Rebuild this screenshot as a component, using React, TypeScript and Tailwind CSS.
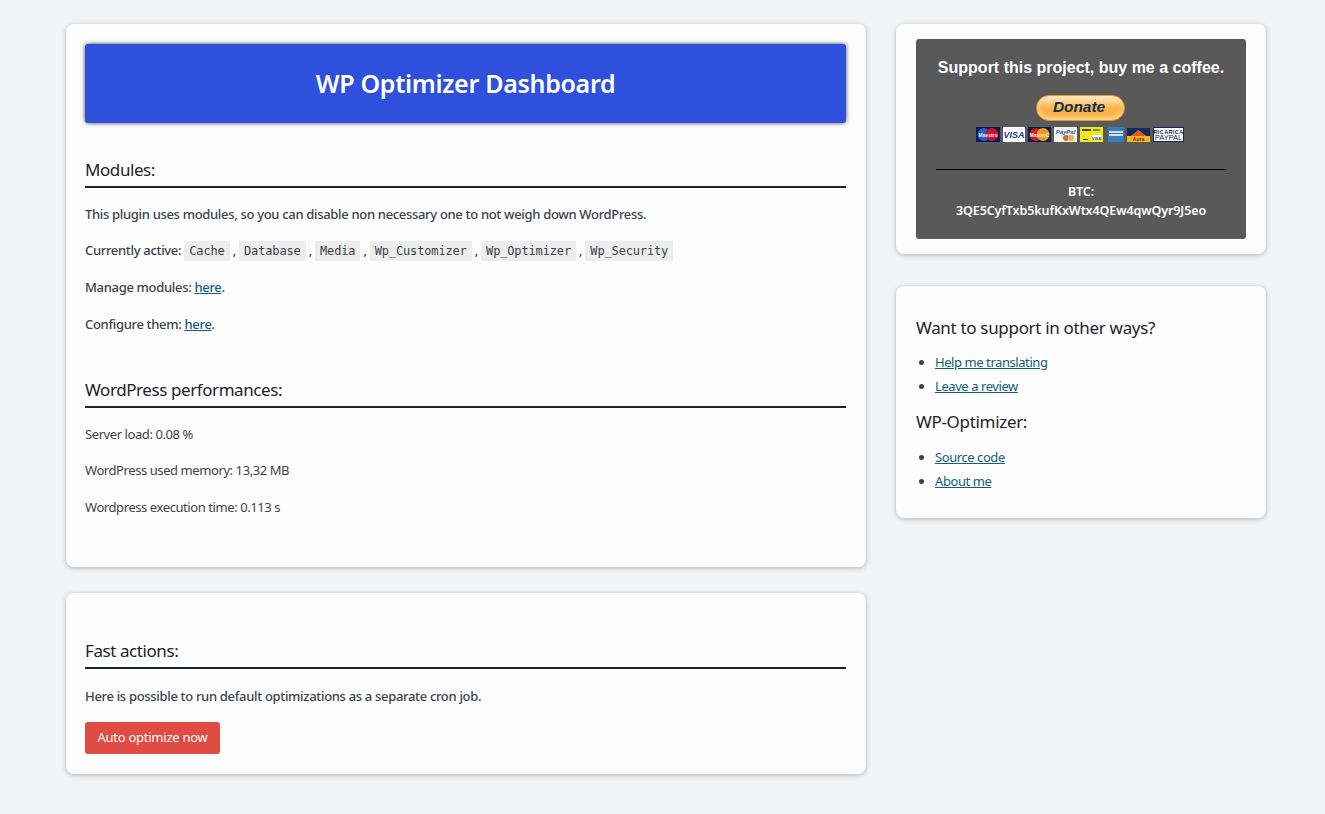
const sans = { fontFamily: '"Noto Sans", "Open Sans", sans-serif' }
const arial = "Liberation Sans"

function SectionTitle({ children }: { children: string }) {
  return <h3 className="text-[17px] leading-[24px] text-[#1d2327] border-b-2 border-[#1d2327] pb-[4px] tracking-[-0.42px]">{children}</h3>
}

function Chip({ children }: { children: string }) {
  return <code className="bg-[#ededed] px-[5px] py-[3px] text-[12px] text-[#3c434a]" style={{ fontFamily: '"DejaVu Sans Mono", monospace', letterSpacing: "-0.15px" }}>{children}</code>
}

function PaymentCards() {
  return (
    <svg width="208" height="15" viewBox="0 0 208 15" className="block">
      {/* maestro */}
      <rect x="0" y="0" width="24" height="15" fill="#0a1a5c" />
      <circle cx="8" cy="7.500" r="6.500" fill="#2a5fc4" />
      <circle cx="16" cy="7.500" r="6.500" fill="#c4142a" />
      <text x="12" y="9.500" textAnchor="middle" fontSize="5" fontWeight="bold" fill="#e8e8f4" fontFamily={arial}>Maestro</text>
      {/* visa */}
      <rect x="27" y="0" width="22" height="15" fill="#fff" />
      <text x="38" y="11" textAnchor="middle" fontSize="9" fontWeight="bold" fontStyle="italic" fill="#1a3d8f" fontFamily={arial}>VISA</text>
      {/* mastercard */}
      <rect x="52" y="0" width="23" height="15" fill="#0f1a52" />
      <circle cx="60" cy="7.500" r="6.500" fill="#d01c26" />
      <circle cx="67" cy="7.500" r="6.500" fill="#f09a1c" />
      <text x="63.500" y="9.500" textAnchor="middle" fontSize="5" fontWeight="bold" fill="#f8e8d8" fontFamily={arial}>MasterC</text>
      {/* paypal */}
      <rect x="78" y="0" width="23" height="15" fill="#f4f0e4" />
      <text x="89.500" y="6.500" textAnchor="middle" fontSize="6" fontWeight="bold" fontStyle="italic" fill="#2b5fa8" fontFamily={arial}>PayPal</text>
      <circle cx="90" cy="11" r="3" fill="#d9653a" />
      <circle cx="95" cy="11" r="3" fill="#e8b04a" />
      {/* postepay */}
      <rect x="104" y="0" width="23" height="15" fill="#f2e61c" />
      <rect x="106" y="2" width="9" height="2" fill="#4a4a20" />
      <rect x="117" y="2" width="7" height="2" fill="#8a8a30" />
      <rect x="116" y="8" width="9" height="5" fill="#fff" />
      <text x="120.500" y="12.500" textAnchor="middle" fontSize="4" fontWeight="bold" fill="#1a3d8f" fontFamily={arial}>VISA</text>
      <rect x="107" y="12" width="5" height="1" fill="#4a4a20" />
      {/* amex */}
      <rect x="132" y="0" width="16" height="15" fill="#3a7cc0" />
      <rect x="133" y="4" width="14" height="2" fill="#cfe0f0" />
      <rect x="133" y="7" width="14" height="2" fill="#cfe0f0" />
      {/* aura */}
      <rect x="151" y="1" width="23" height="14" fill="#12285e" />
      <path d="M153 10l9.500-7 9.500 7z" fill="#e05a1c" />
      <rect x="151" y="9" width="23" height="6" fill="#f0b428" />
      <text x="162.500" y="14" textAnchor="middle" fontSize="5" fontWeight="bold" fill="#7a2a10" fontFamily={arial}>Aura</text>
      {/* ricarica paypal */}
      <rect x="177.500" y="0.500" width="30" height="14" fill="#fff" stroke="#12245c" />
      <text x="192.500" y="6.500" textAnchor="middle" fontSize="5.500" fontWeight="bold" fill="#12245c" fontFamily={arial} letterSpacing="0.4">RICARICA</text>
      <text x="192.500" y="13" textAnchor="middle" fontSize="7.500" fill="#12245c" fontFamily={arial}>PAYPAL</text>
    </svg>
  )
}

function DonateButton() {
  return (
    <div className="w-[89px] h-[26px] rounded-full border border-[#dd9a3c] flex items-center justify-center bg-gradient-to-b from-[#fde9c0] via-[#fdb64c] to-[#f7a631] shadow-[inset_0_-4px_4px_rgba(255,226,160,0.7)]">
      <span className="text-[15.500px] font-bold italic text-[#10304e] leading-none -mt-[2px] -ml-[3px] tracking-[-0.1px]" style={{ fontFamily: '"Liberation Sans", sans-serif' }}>Donate</span>
    </div>
  )
}

const cardClass = "bg-[#fdfdfd] rounded-[8px] shadow-[0_1px_5px_rgba(0,0,0,0.28)]"
const bodyClass = "text-[13px] leading-[20px] font-medium text-[#3c434a] tracking-[-0.32px]"
const linkClass = "text-[#135e7c] underline"

export default function App() {
  return (
    <div className="min-h-[814px] bg-[#f3f4f6] pt-[24px] pl-[66px] flex gap-[30px] items-start" style={sans}>
      <div className="w-[800px] flex flex-col gap-[26px]">
        <div className={`${cardClass} h-[543px] pt-[20px] pl-[19px] pr-[20px]`}>
          <div className="h-[79px] bg-[#2f4fdd] rounded-[3px] shadow-[0_0_4px_rgba(0,0,0,0.7)] flex items-center justify-center">
            <h1 className="text-[25px] font-semibold text-white tracking-[-0.3px]">WP Optimizer Dashboard</h1>
          </div>

          <div className="mt-[35px]">
            <SectionTitle>Modules:</SectionTitle>
          </div>
          <p className={`mt-[16px] ${bodyClass}`}>This plugin uses modules, so you can disable non necessary one to not weigh down WordPress.</p>
          <p className={`mt-[16px] h-[20px] ${bodyClass} whitespace-nowrap`}>
            Currently active: <Chip>Cache</Chip> , <Chip>Database</Chip> , <Chip>Media</Chip> , <Chip>Wp_Customizer</Chip> , <Chip>Wp_Optimizer</Chip> , <Chip>Wp_Security</Chip>
          </p>
          <p className={`mt-[17px] ${bodyClass}`}>
            Manage modules: <a className={linkClass}>here</a>.
          </p>
          <p className={`mt-[17px] ${bodyClass}`}>
            Configure them: <a className={linkClass}>here</a>.
          </p>

          <div className="mt-[44px]">
            <SectionTitle>WordPress performances:</SectionTitle>
          </div>
          <div className="text-[13px] leading-[20px] text-[#3c434a] tracking-[-0.42px]">
            <p className="mt-[16px]">Server load: 0.08 %</p>
            <p className="mt-[16px]">WordPress used memory: 13,32 MB</p>
            <p className="mt-[17px]">Wordpress execution time: 0.113 s</p>
          </div>
        </div>

        <div className={`${cardClass} h-[181px] pt-[46px] pl-[19px] pr-[20px]`}>
          <SectionTitle>Fast actions:</SectionTitle>
          <p className={`mt-[17px] ${bodyClass}`}>Here is possible to run default optimizations as a separate cron job.</p>
          <button className="mt-[16px] h-[32px] w-[135px] rounded-[3px] bg-[#e04b43] text-white text-[13px] tracking-[-0.25px]">Auto optimize now</button>
        </div>
      </div>

      <div className="w-[370px] flex flex-col gap-[32px]">
        <div className={`${cardClass} h-[230px] pt-[15px] px-[20px]`}>
          <div className="h-[200px] bg-[#595959] rounded-[3px] text-white text-center pt-[20px] px-[20px]">
            <div className="text-[16px] leading-[18px] font-bold whitespace-nowrap" style={{ fontFamily: '"Liberation Sans", sans-serif' }}>Support this project, buy me a coffee.</div>
            <div className="mt-[18px] pl-[100px]"><DonateButton /></div>
            <div className="mt-[6px] pl-[40px]"><PaymentCards /></div>
            <div className="mt-[27px] border-t border-black" />
            <div className="mt-[12px] text-[12.500px] leading-[19px] font-semibold tracking-[-0.1px] whitespace-nowrap">
              BTC:<br />3QE5CyfTxb5kufKxWtx4QEw4qwQyr9J5eo
            </div>
          </div>
        </div>

        <div className={`${cardClass} h-[232px] pt-[30px] px-[20px]`}>
          <h3 className="text-[17px] leading-[24px] text-[#1d2327] tracking-[-0.32px]">Want to support in other ways?</h3>
          <ul className="mt-[12px] flex flex-col gap-[4px] list-disc pl-[19px] text-[13px] leading-[20px] tracking-[-0.43px] text-[#3c434a]">
            <li><a className={linkClass}>Help me translating</a></li>
            <li><a className={linkClass}>Leave a review</a></li>
          </ul>
          <h3 className="mt-[14px] text-[17px] leading-[24px] text-[#1d2327] tracking-[-0.32px]">WP-Optimizer:</h3>
          <ul className="mt-[13px] flex flex-col gap-[4px] list-disc pl-[19px] text-[13px] leading-[20px] tracking-[-0.43px] text-[#3c434a]">
            <li><a className={linkClass}>Source code</a></li>
            <li><a className={linkClass}>About me</a></li>
          </ul>
        </div>
      </div>
    </div>
  )
}
